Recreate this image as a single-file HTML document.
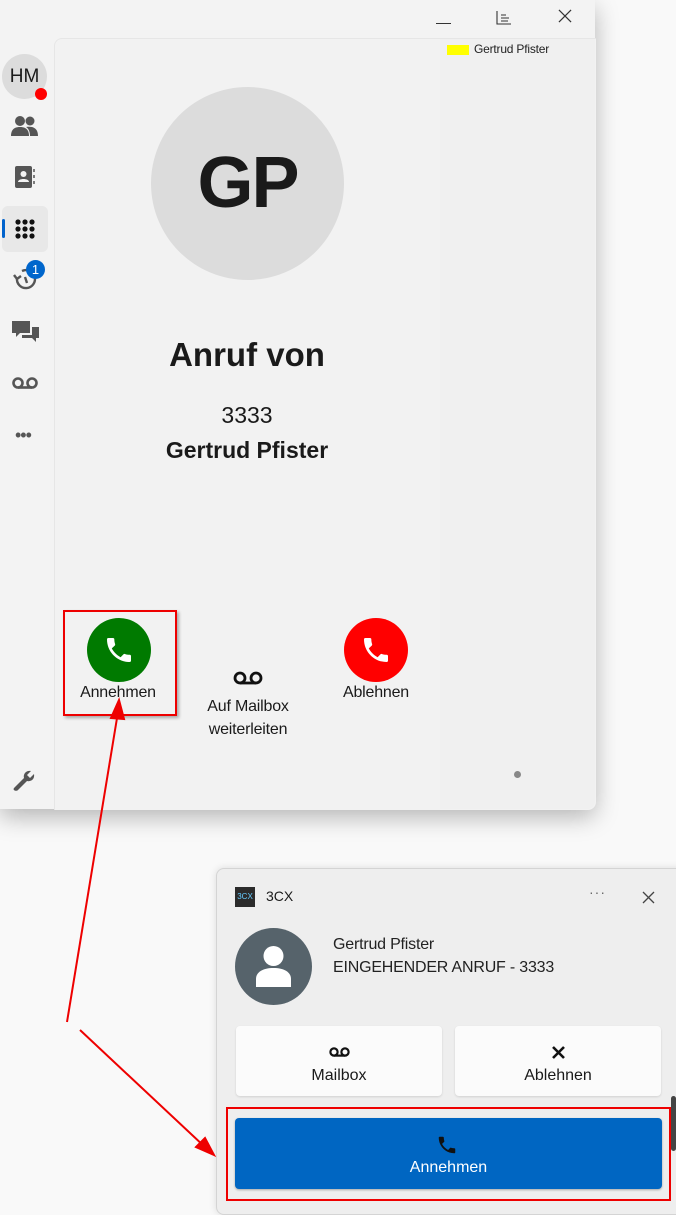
<!DOCTYPE html>
<html><head><meta charset="utf-8"><style>
body{margin:0;width:676px;height:1203px;background:#f9f9f9;position:relative;overflow:hidden;font-family:"Segoe UI","Liberation Sans","DejaVu Sans",sans-serif;color:#1a1a1a}
.abs{position:absolute}
.win{left:0;top:0;width:595px;height:809px;background:#f3f3f3;border-radius:0 0 8px 0;box-shadow:0 8px 24px rgba(0,0,0,.28)}
.panel{left:54px;top:38px;width:541px;height:771px;background:#f2f2f2;border-top:1px solid #e6e6e6;border-left:1px solid #e6e6e6;border-radius:8px 0 8px 0}
.c{text-align:center}
.ic{fill:#555}
</style></head><body>
<div class="abs win"></div>
<div class="abs panel"></div>
<div class="abs" style="left:440px;top:39px;width:155px;height:770px;background:#f0f0f0;border-radius:0 0 8px 0"></div>
<!-- titlebar -->
<div class="abs" style="left:436px;top:23px;width:15px;height:1.2px;background:#333"></div>
<svg class="abs" style="left:496px;top:10px" width="16" height="16" viewBox="0 0 16 16" fill="none" stroke="#333" stroke-width="1.1"><path d="M1 1V14H15M5 5H10M5 8H13M5 11H12"/></svg>
<svg class="abs" style="left:558px;top:9px" width="14" height="14" viewBox="0 0 15 15" stroke="#333" stroke-width="1.3"><path d="M1 1L14 14M14 1L1 14"/></svg>
<div class="abs" style="left:447px;top:45px;width:22px;height:10px;background:#ffff00"></div>
<div class="abs" style="left:474px;top:42px;font-size:12px;color:#222;letter-spacing:-0.2px">Gertrud Pfister</div>
<!-- sidebar -->
<div class="abs c" style="left:2px;top:54px;width:45px;height:45px;border-radius:50%;background:#dcdcdc;line-height:45px;font-size:19px">HM</div>
<div class="abs" style="left:35px;top:88px;width:12px;height:12px;border-radius:50%;background:#f00"></div>
<svg class="abs" style="left:11px;top:115px" width="27" height="22" viewBox="0 0 27 22"><circle class="ic" cx="9" cy="6" r="5"/><circle class="ic" cx="19" cy="6" r="4.5"/><path class="ic" d="M0 21C0 14 4 12 9 12S18 14 18 21Z"/><path class="ic" d="M15 12C22 11 27 13 27 21H19C19 16 17 13 15 12Z"/></svg>
<svg class="abs" style="left:15px;top:166px" width="21" height="22" viewBox="0 0 21 22"><rect class="ic" x="0" y="0" width="17" height="22" rx="2"/><circle cx="8.5" cy="8" r="3" fill="#f3f3f3"/><path d="M3 16C3 12 14 12 14 16Z" fill="#f3f3f3"/><path d="M19 3V6M19 9V12M19 15V18" stroke="#555" stroke-width="1.5"/></svg>
<div class="abs" style="left:2px;top:206px;width:46px;height:46px;background:#e8e8e8;border-radius:6px"></div>
<div class="abs" style="left:2px;top:219px;width:3px;height:19px;background:#0062cc;border-radius:2px"></div>
<svg class="abs" style="left:15px;top:219px" width="20" height="20" viewBox="0 0 20 20" fill="#111"><circle cx="3" cy="3" r="2.6"/><circle cx="10" cy="3" r="2.6"/><circle cx="17" cy="3" r="2.6"/><circle cx="3" cy="10" r="2.6"/><circle cx="10" cy="10" r="2.6"/><circle cx="17" cy="10" r="2.6"/><circle cx="3" cy="17" r="2.6"/><circle cx="10" cy="17" r="2.6"/><circle cx="17" cy="17" r="2.6"/></svg>
<svg class="abs" style="left:13px;top:266px" width="26" height="26" viewBox="0 0 26 26" fill="none" stroke="#555" stroke-width="2.4"><path d="M4 12A9 9 0 1 0 9 5"/><path d="M12 11L14 17" /><path d="M1 9L4 13L8 10" /></svg>
<div class="abs c" style="left:26px;top:260px;width:19px;height:19px;border-radius:50%;background:#0066cc;color:#fff;font-size:13px;line-height:19px">1</div>
<svg class="abs" style="left:12px;top:321px" width="27" height="22" viewBox="0 0 27 22"><path class="ic" d="M0 0H18V12H8L4 16V12H0Z"/><path class="ic" d="M20 6H27V17H24V21L20 17H10V14H20Z"/></svg>
<svg class="abs" style="left:12px;top:377px" width="26" height="12" viewBox="0 0 26 12" fill="none" stroke="#555" stroke-width="2.6"><circle cx="6" cy="6" r="4.5"/><circle cx="20" cy="6" r="4.5"/><path d="M6 10.5H20"/></svg>
<div class="abs" style="left:15px;top:430px;font-size:18px;color:#555;letter-spacing:-1px;line-height:10px">•••</div>
<svg class="abs" style="left:13px;top:770px" width="22" height="22" viewBox="0 0 22 22"><path class="ic" d="M2 17L11 8C10 4 13 0 18 1L14 5L17 8L21 4C22 9 18 12 14 11L5 20C4 21 2 21 1 20S1 18 2 17Z"/></svg>
<!-- main -->
<div class="abs c" style="left:151px;top:87px;width:193px;height:193px;border-radius:50%;background:#dcdcdc;line-height:193px;font-size:72px;font-weight:600;color:#1a1a1a;letter-spacing:-2px">GP</div>
<div class="abs c" style="left:97px;top:336px;width:300px;font-size:33px;font-weight:600">Anruf von</div>
<div class="abs c" style="left:97px;top:402px;width:300px;font-size:23px">3333</div>
<div class="abs c" style="left:97px;top:437px;width:300px;font-size:23px;font-weight:600">Gertrud Pfister</div>
<div class="abs" style="left:63px;top:610px;width:110px;height:102px;border:2px solid #e00;box-shadow:2px 2px 3px rgba(0,0,0,.3)"></div>
<div class="abs" style="left:87px;top:618px;width:64px;height:64px;border-radius:50%;background:#007a00"></div>
<div class="abs" style="left:344px;top:618px;width:64px;height:64px;border-radius:50%;background:#f00"></div>
<svg class="abs" style="left:103px;top:634px" width="32" height="32" viewBox="0 0 24 24" fill="#fff"><path d="M6.6 10.8c1.4 2.8 3.8 5.1 6.6 6.6l2.2-2.2c.3-.3.7-.4 1-.2 1.1.4 2.3.6 3.6.6.6 0 1 .4 1 1V20c0 .6-.4 1-1 1C10.6 21 3 13.4 3 4c0-.6.4-1 1-1h3.5c.6 0 1 .4 1 1 0 1.3.2 2.5.6 3.6.1.3 0 .7-.2 1z"/></svg>
<svg class="abs" style="left:360px;top:634px" width="32" height="32" viewBox="0 0 24 24" fill="#fff"><path d="M6.6 10.8c1.4 2.8 3.8 5.1 6.6 6.6l2.2-2.2c.3-.3.7-.4 1-.2 1.1.4 2.3.6 3.6.6.6 0 1 .4 1 1V20c0 .6-.4 1-1 1C10.6 21 3 13.4 3 4c0-.6.4-1 1-1h3.5c.6 0 1 .4 1 1 0 1.3.2 2.5.6 3.6.1.3 0 .7-.2 1z"/></svg>
<div class="abs c" style="left:58px;top:684px;width:120px;font-size:16px;letter-spacing:-0.2px">Annehmen</div>
<div class="abs c" style="left:316px;top:684px;width:120px;font-size:16px;letter-spacing:-0.2px">Ablehnen</div>
<svg class="abs" style="left:233px;top:671px" width="30" height="14" viewBox="0 0 30 14" fill="none" stroke="#111" stroke-width="2.8"><circle cx="7" cy="7" r="5"/><circle cx="23" cy="7" r="5"/><path d="M7 12H23"/></svg>
<div class="abs c" style="left:178px;top:695px;width:140px;font-size:16px;line-height:23px;letter-spacing:-0.2px">Auf Mailbox<br>weiterleiten</div>
<div class="abs" style="left:514px;top:771px;width:7px;height:7px;border-radius:50%;background:#888"></div>
<!-- popup -->
<div class="abs" style="left:216px;top:868px;width:470px;height:345px;background:#eeeeee;border:1px solid #d4d4d4;border-radius:8px;box-shadow:0 0 8px rgba(0,0,0,.12)"></div>
<div class="abs c" style="left:235px;top:887px;width:20px;height:20px;background:#2b2b2b;color:#6cf;font-size:8px;line-height:20px">3CX</div>
<div class="abs" style="left:266px;top:888px;font-size:14px">3CX</div>
<div class="abs" style="left:589px;top:884px;font-size:14px;color:#666;letter-spacing:1px">···</div>
<svg class="abs" style="left:642px;top:891px" width="13" height="13" viewBox="0 0 13 13" stroke="#444" stroke-width="1.3"><path d="M1 1L12 12M12 1L1 12"/></svg>
<div class="abs" style="left:235px;top:928px;width:77px;height:77px;border-radius:50%;background:#56636b"></div>
<svg class="abs" style="left:255px;top:945px" width="37" height="42" viewBox="0 0 37 42" fill="#fff"><circle cx="18.5" cy="11" r="10"/><path d="M1 42V34C1 27 8 23 18.5 23S36 27 36 34V42Z"/></svg>
<div class="abs" style="left:333px;top:936px;font-size:16px;color:#222;letter-spacing:-0.2px">Gertrud Pfister</div>
<div class="abs" style="left:333px;top:959px;font-size:16px;color:#222;letter-spacing:-0.2px">EINGEHENDER ANRUF - 3333</div>
<div class="abs" style="left:236px;top:1026px;width:206px;height:70px;background:#fbfbfb;border-radius:4px;box-shadow:0 1px 2px rgba(0,0,0,.12)"></div>
<div class="abs" style="left:455px;top:1026px;width:206px;height:70px;background:#fbfbfb;border-radius:4px;box-shadow:0 1px 2px rgba(0,0,0,.12)"></div>
<svg class="abs" style="left:329px;top:1047px" width="21" height="10" viewBox="0 0 21 10" fill="none" stroke="#111" stroke-width="2.2"><circle cx="5" cy="5" r="3.6"/><circle cx="16" cy="5" r="3.6"/><path d="M5 8.6H16"/></svg>
<svg class="abs" style="left:552px;top:1046px" width="13" height="13" viewBox="0 0 13 13" stroke="#111" stroke-width="2.6"><path d="M1 1L12 12M12 1L1 12"/></svg>
<div class="abs c" style="left:236px;top:1067px;width:206px;font-size:16px">Mailbox</div>
<div class="abs c" style="left:455px;top:1067px;width:206px;font-size:16px">Ablehnen</div>
<div class="abs" style="left:226px;top:1107px;width:441px;height:90px;border:2px solid #e00"></div>
<div class="abs" style="left:235px;top:1118px;width:427px;height:71px;background:#0066c2;border-radius:4px;box-shadow:0 1px 2px rgba(0,0,0,.3)"></div>
<svg class="abs" style="left:436px;top:1134px" width="22" height="22" viewBox="0 0 24 24" fill="#111"><path d="M6.6 10.8c1.4 2.8 3.8 5.1 6.6 6.6l2.2-2.2c.3-.3.7-.4 1-.2 1.1.4 2.3.6 3.6.6.6 0 1 .4 1 1V20c0 .6-.4 1-1 1C10.6 21 3 13.4 3 4c0-.6.4-1 1-1h3.5c.6 0 1 .4 1 1 0 1.3.2 2.5.6 3.6.1.3 0 .7-.2 1z"/></svg>
<div class="abs c" style="left:235px;top:1159px;width:427px;font-size:16px;color:#fff">Annehmen</div>
<div class="abs" style="left:671px;top:1096px;width:5px;height:55px;background:#444;border-radius:3px"></div>
<!-- arrows -->
<svg class="abs" style="left:0;top:0" width="676" height="1203"><g stroke="#e00" stroke-width="2" fill="#e00"><path d="M67 1022L118 712"/><path d="M119 700L111 718L124 719Z"/><path d="M80 1030L206 1148"/><path d="M214 1155L196 1147L205 1138Z"/></g></svg>
</body></html>
